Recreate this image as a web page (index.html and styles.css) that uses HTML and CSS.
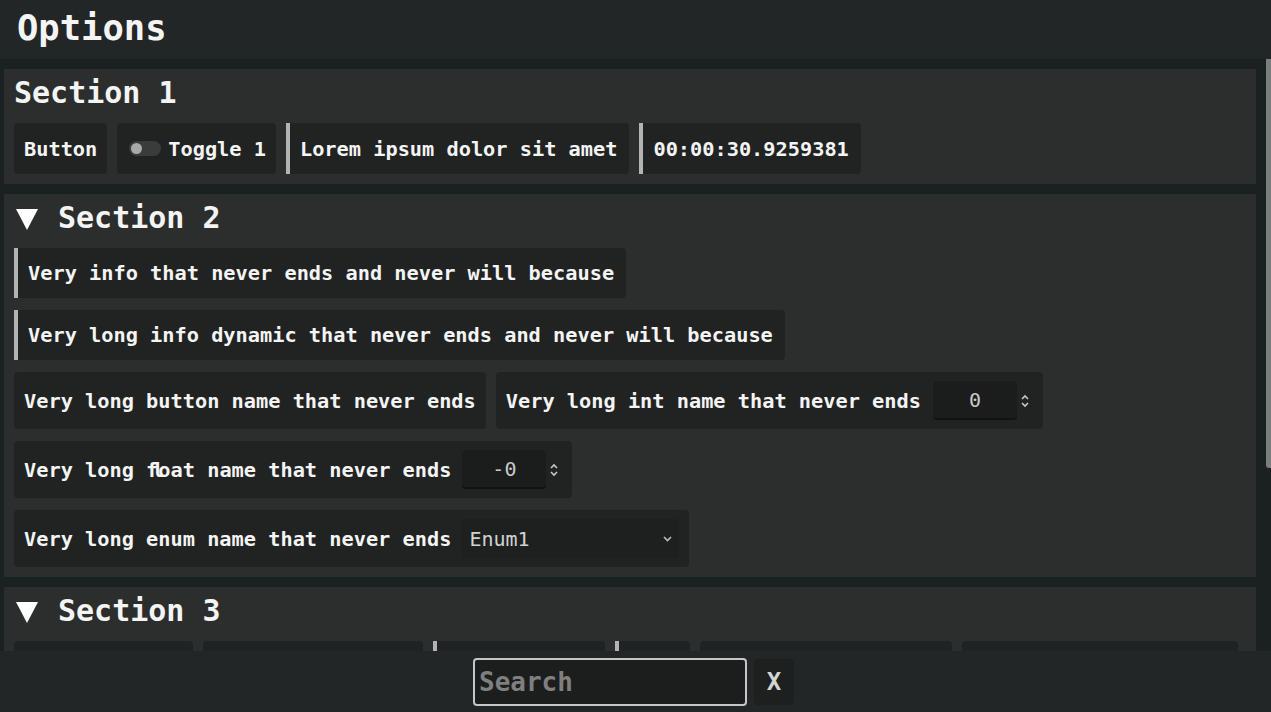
FILE: index.html
```html
<!DOCTYPE html>
<html lang="en">
<head>
<meta charset="utf-8">
<title>Options</title>
<link rel="stylesheet" href="styles.css">
</head>
<body>
<header class="topbar">Options</header>
<main class="content">
  <section class="panel">
    <h2 class="panel-title">Section 1</h2>
    <div class="rows">
      <div class="row row-s1">
        <button class="item btn">Button</button>
        <div class="item toggle"><span class="switch"><span class="knob"></span></span>Toggle 1</div>
        <div class="item info">Lorem ipsum dolor sit amet</div>
        <div class="item info">00:00:30.9259381</div>
      </div>
    </div>
  </section>

  <section class="panel">
    <h2 class="panel-title"><svg class="tri" width="22" height="21" viewBox="0 0 22 21"><polygon points="0,0 22,0 11,21" fill="#ffffff"/></svg>Section 2</h2>
    <div class="rows">
      <div class="row"><div class="item info">Very info that never ends and never will because</div></div>
      <div class="row"><div class="item info">Very long info dynamic that never ends and never will because</div></div>
      <div class="row row-tall">
        <button class="item btn">Very long button name that never ends</button>
        <div class="item field int">
          <span class="label">Very long int name that never ends</span>
          <span class="num">0</span>
          <svg class="spin" width="10" height="16" viewBox="0 0 10 16"><polyline points="2,6 5,3 8,6" fill="none" stroke="#c8c8c8" stroke-width="1.6"/><polyline points="2,10 5,13 8,10" fill="none" stroke="#c8c8c8" stroke-width="1.6"/></svg>
        </div>
      </div>
      <div class="row row-tall">
        <div class="item field flt">
          <span class="label">Very long <span class="lig">fl</span>oat name that never ends</span>
          <span class="num">-0</span>
          <svg class="spin" width="10" height="16" viewBox="0 0 10 16"><polyline points="2,6 5,3 8,6" fill="none" stroke="#c8c8c8" stroke-width="1.6"/><polyline points="2,10 5,13 8,10" fill="none" stroke="#c8c8c8" stroke-width="1.6"/></svg>
        </div>
      </div>
      <div class="row row-tall">
        <div class="item field enum">
          <span class="label">Very long enum name that never ends</span>
          <span class="select"><span class="select-text">Enum1</span><svg width="9" height="6" viewBox="0 0 9 6"><polyline points="1,1 4.5,4.5 8,1" fill="none" stroke="#bdbdbd" stroke-width="1.6"/></svg></span>
        </div>
      </div>
    </div>
  </section>

  <section class="panel">
    <h2 class="panel-title"><svg class="tri" width="22" height="21" viewBox="0 0 22 21"><polygon points="0,0 22,0 11,21" fill="#ffffff"/></svg>Section 3</h2>
    <div class="rows">
      <div class="row row-s1">
        <button class="item btn">Button number</button>
        <div class="item toggle"><span class="switch"><span class="knob"></span></span>Toggle second</div>
        <div class="item info">Info message</div>
        <div class="item info">Text</div>
        <button class="item btn">Another button 1234</button>
        <button class="item btn">Yet another button 12</button>
      </div>
    </div>
  </section>
  <div class="thumb"></div>
</main>
<footer class="bottombar">
  <input class="search" type="text" placeholder="Search" autofocus>
  <button class="clear">X</button>
</footer>
</body>
</html>
```

FILE: styles.css
```css
* { box-sizing: border-box; }

html, body {
  margin: 0;
  height: 100%;
}

body {
  background: #1b2020;
  color: #f4f4f4;
  font-family: "DejaVu Sans Mono", "Liberation Mono", monospace;
  font-weight: bold;
  display: flex;
  flex-direction: column;
  overflow: hidden;
}

.topbar {
  height: 59px;
  flex: none;
  background: #232627;
  padding-left: 17px;
  font-size: 35.5px;
  line-height: 56px;
}

.content {
  flex: 1;
  min-height: 0;
  overflow: hidden;
  position: relative;
  padding: 10px 15px 0 4px;
  display: flex;
  flex-direction: column;
  gap: 10px;
}

.thumb {
  position: absolute;
  right: 0;
  top: -2px;
  width: 5px;
  height: 411px;
  background: #7b7e7c;
  border-radius: 3px 0 0 3px;
}

.panel {
  background: #2c2e2e;
  padding: 0 10px 10px;
  flex: none;
}

.panel-title {
  margin: 0 0 6px;
  height: 48px;
  font-size: 30px;
  line-height: 48px;
  font-weight: bold;
  display: flex;
  align-items: center;
}

.tri {
  margin-left: 2px;
  margin-right: 20px;
  margin-top: 2px;
}

.rows {
  display: flex;
  flex-direction: column;
  gap: 12px;
}

.row {
  display: flex;
  gap: 10px;
  align-items: stretch;
}

.item {
  background: #212323;
  border-radius: 4px;
  padding: 0 10px;
  height: 50px;
  display: flex;
  align-items: center;
  white-space: nowrap;
  font-family: inherit;
  font-weight: bold;
  font-size: 20.3px;
  color: #f4f4f4;
  border: none;
}

.row-s1 .item { height: 51px; }
.row-tall .item { height: 57px; }

.btn { cursor: pointer; }

.toggle {
  padding-left: 12px;
  gap: 7px;
}

.switch {
  width: 32px;
  height: 15px;
  border-radius: 8px;
  background: #3a3c3c;
  display: flex;
  align-items: center;
  padding-left: 2px;
}

.knob {
  width: 11px;
  height: 11px;
  border-radius: 50%;
  background: #a9a9a9;
}

.info {
  border-left: 4px solid #b3b3b3;
  border-radius: 0 4px 4px 0;
  padding-right: 12px;
}

.field { padding-right: 13px; }

.label { margin-right: 12px; }
.flt .label, .enum .label { margin-right: 11px; }

.lig { letter-spacing: -6.1px; }

.num {
  width: 84px;
  height: 39px;
  background: #1b1c1c;
  border-bottom: 2px solid #111212;
  border-radius: 4px;
  display: flex;
  align-items: center;
  justify-content: center;
  color: #c9c9c9;
  font-weight: normal;
  font-size: 20px;
}

.spin { margin-left: 3px; }

.enum { padding-right: 10px; }

.select {
  width: 217px;
  height: 39px;
  background: #1e2020;
  border-radius: 3px;
  display: flex;
  align-items: center;
  justify-content: space-between;
  padding: 0 7px 0 7px;
  color: #d2d2d2;
  font-weight: normal;
  font-size: 20px;
}

.bottombar {
  height: 61px;
  flex: none;
  background: #232627;
  display: flex;
  justify-content: center;
  align-items: center;
  gap: 7px;
  padding-right: 4px;
}

.search {
  width: 274px;
  height: 48px;
  border: 2px solid #c6c6c6;
  border-radius: 4px;
  background: #1c1d1d;
  color: #f4f4f4;
  caret-color: #ffffff;
  padding: 0 4px;
  font-family: "DejaVu Sans Mono", monospace;
  font-weight: bold;
  font-size: 26px;
  outline: none;
}

.search::placeholder { color: #7f7f7f; }

.clear {
  width: 40px;
  height: 46px;
  background: #1e2020;
  border: none;
  border-radius: 3px;
  color: #d4d4d4;
  font-family: "DejaVu Sans Mono", monospace;
  font-weight: bold;
  font-size: 24px;
  padding: 0;
}
```
